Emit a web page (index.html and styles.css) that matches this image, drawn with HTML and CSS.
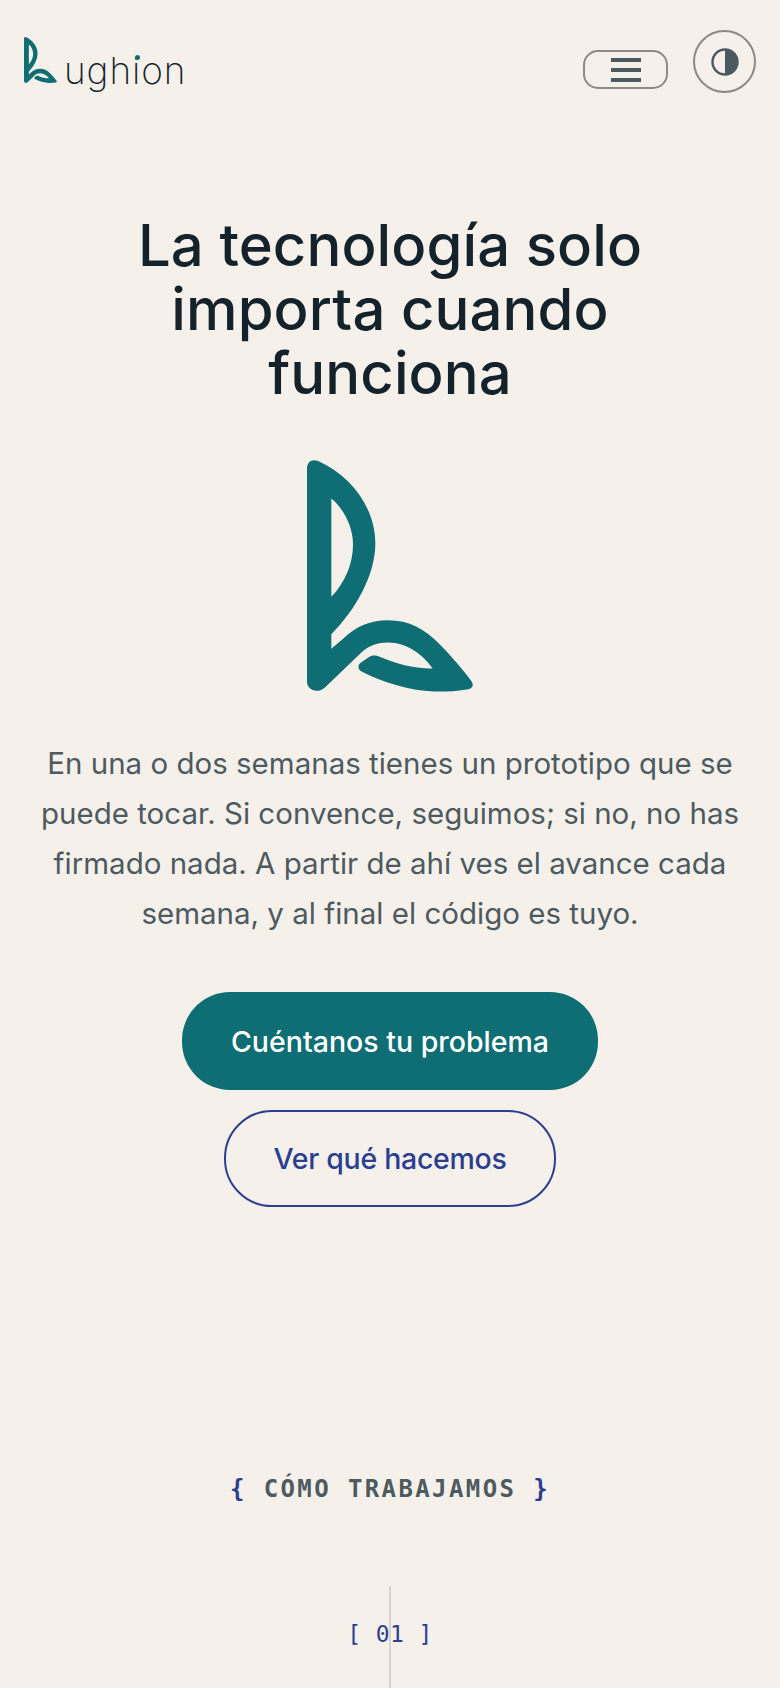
FILE: index.html
```html
<!DOCTYPE html>
<html lang="es">
  <head>
    <meta charset="UTF-8" />
    <meta name="viewport" content="width=device-width, initial-scale=1.0" />
    <title>Lughion</title>
    <link rel="stylesheet" href="styles.css">
  </head>
  <body>
    <svg class="sprite" aria-hidden="true">
      <symbol id="logo-mark" viewBox="80 60 498 695">
        <path
          fill-rule="evenodd"
          d="M80 85C80 66 94 55 112 62C215 108 285 205 285 310C285 405 225 510 153 582V626L190 594C225 560 268 540 322 540C388 540 432 566 478 612C515 650 550 690 574 724C582 738 574 746 560 748C520 754 490 755 460 754C385 752 305 725 245 695C232 688 231 677 241 668L265 651C275 644 287 645 298 650C350 672 400 686 457 685C425 640 378 607 322 607C285 607 262 619 240 640L134 742C112 762 80 750 80 725ZM153 175V470C195 425 218 370 218 312C218 262 192 208 153 175Z"
        />
      </symbol>
    </svg>

    <header class="main-header">
      <a class="brand" href="#">
        <svg class="brand-mark"><use href="#logo-mark" /></svg>
        <span class="wordmark">ugh<span class="wordmark-i">i</span>on</span>
      </a>
      <div class="header-actions">
        <button class="menu-btn" title="Menú">
          <span></span>
          <span></span>
          <span></span>
        </button>
        <button class="theme-btn" title="Cambiar tema">
          <svg width="28" height="28" viewBox="0 0 28 28">
            <circle cx="14" cy="14" r="12.5" fill="none" stroke="currentColor" stroke-width="2.4" />
            <path d="M14 1.5a12.5 12.5 0 0 1 0 25z" fill="currentColor" />
          </svg>
        </button>
      </div>
    </header>

    <main class="hero">
      <h1>La tecnología solo importa cuando funciona</h1>
      <svg class="hero-mark"><use href="#logo-mark" /></svg>
      <p>
        En una o dos semanas tienes un prototipo que se puede tocar. Si
        convence, seguimos; si no, no has firmado nada. A partir de ahí ves el
        avance cada semana, y al final el código es tuyo.
      </p>
      <div class="hero-actions">
        <a class="btn btn-primary" href="#">Cuéntanos tu problema</a>
        <a class="btn btn-outline" href="#">Ver qué hacemos</a>
      </div>
    </main>

    <section class="process">
      <h2><span class="brace">{</span> CÓMO TRABAJAMOS <span class="brace">}</span></h2>
      <div class="timeline">
        <span class="step-number">[ 01 ]</span>
      </div>
    </section>
  </body>
</html>
```

FILE: styles.css
```css
* {
  box-sizing: border-box;
}
html,
body {
  height: 100%;
}
body {
  font-family: Inter, "Noto Sans", sans-serif;
  background: #f5f1ea;
  color: #14232b;
  margin: 0;
  overflow: hidden;
}
.sprite {
  display: none;
}
.main-header {
  display: flex;
  align-items: flex-start;
  justify-content: space-between;
  padding: 30px 24px 0 24px;
}
.brand {
  display: flex;
  align-items: flex-start;
  margin-top: 7px;
  color: inherit;
  text-decoration: none;
}
.brand-mark {
  width: 33px;
  height: 46px;
  fill: #0f6e73;
}
.wordmark {
  margin: 12px 0 0 7px;
  font-size: 37px;
  font-weight: 200;
  line-height: 44px;
  letter-spacing: 0.9px;
}
.wordmark-i {
  position: relative;
}
.wordmark-i::after {
  content: "";
  position: absolute;
  left: 2.5px;
  top: 7px;
  width: 5px;
  height: 5px;
  border-radius: 50%;
  background: #0f6e73;
}
.header-actions {
  display: flex;
  align-items: flex-start;
  gap: 25px;
}
.menu-btn {
  display: flex;
  flex-direction: column;
  align-items: center;
  justify-content: center;
  gap: 6px;
  width: 85px;
  height: 39px;
  margin-top: 20px;
  padding: 0;
  background: none;
  border: 2px solid #8c8a82;
  border-radius: 15px;
}
.menu-btn span {
  width: 30px;
  height: 4px;
  background: #4b5a60;
}
.theme-btn {
  display: flex;
  align-items: center;
  justify-content: center;
  width: 63px;
  height: 63px;
  padding: 0;
  color: #4b5a60;
  background: none;
  border: 2px solid #8c8a82;
  border-radius: 50%;
}
.hero {
  display: flex;
  flex-direction: column;
  align-items: center;
  margin-top: 120px;
}
h1 {
  width: 560px;
  margin: 0;
  font-size: 58px;
  font-weight: 500;
  line-height: 64px;
  letter-spacing: 0.1px;
  text-align: center;
}
.hero-mark {
  width: 166px;
  height: 232px;
  margin-top: 55px;
  fill: #0f6e73;
}
.hero p {
  width: 710px;
  margin: 46px 0 0;
  color: #4d5a5f;
  font-size: 29.5px;
  line-height: 50px;
  text-align: center;
}
.hero-actions {
  display: flex;
  flex-direction: column;
  align-items: center;
  gap: 20px;
  margin-top: 54px;
}
.btn {
  display: flex;
  align-items: center;
  height: 97px;
  padding: 0 49px;
  border-radius: 48px;
  font-size: 28.5px;
  font-weight: 500;
  text-decoration: none;
}
.btn-primary {
  height: 98px;
  color: #fff;
  background: #0f6e73;
}
.btn-outline {
  padding: 0 47px;
  color: #2c3e8f;
  letter-spacing: -0.3px;
  border: 2px solid #2c3e8f;
}
.process {
  display: flex;
  flex-direction: column;
  align-items: center;
  margin-top: 267px;
}
h2 {
  margin: 0;
  color: #4d5a5f;
  font-family: "DejaVu Sans Mono", monospace;
  font-size: 24px;
  font-weight: 700;
  line-height: 30px;
  letter-spacing: 2.4px;
}
.brace {
  color: #2c3e8f;
}
.timeline {
  position: relative;
  display: flex;
  justify-content: center;
  width: 100%;
  height: 102px;
  margin-top: 82px;
  padding-top: 34px;
}
.timeline::before {
  content: "";
  position: absolute;
  left: 389px;
  top: 0;
  bottom: 0;
  width: 1.5px;
  background: #d6d3cc;
}
.step-number {
  color: #2c3e8f;
  font-family: "DejaVu Sans Mono", monospace;
  font-size: 23px;
  line-height: 28px;
  letter-spacing: 0.4px;
}
```
